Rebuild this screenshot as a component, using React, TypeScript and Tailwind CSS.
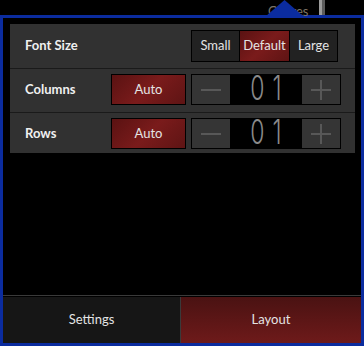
import React from 'react';

const RED = 'bg-[linear-gradient(135deg,#5a1212_0%,#7a1b1b_50%,#5e1414_100%)]';

function Stepper() {
  return (
    <div className="flex h-[31px] w-[150px] border border-black bg-black">
      <div className="flex w-[38px] items-center justify-center bg-[#353535]">
        <div className="h-[2px] w-[20px] bg-[#585858]" />
      </div>
      <div className="flex flex-1 items-center justify-center bg-black pl-[8px]">
        <span className="inline-block scale-y-[1.45] font-['Inter'] text-[23px] font-light leading-none tracking-[8px] text-[#8a8a8a]">
          01
        </span>
      </div>
      <div className="relative flex w-[38px] items-center justify-center bg-[#353535]">
        <div className="absolute h-[2px] w-[20px] bg-[#585858]" />
        <div className="absolute h-[20px] w-[2px] bg-[#585858]" />
      </div>
    </div>
  );
}

function AutoButton() {
  return (
    <div
      className={`flex h-[31px] w-[75px] items-center justify-center border border-black ${RED} text-[13px] text-[#e4e4e4]`}
    >
      Auto
    </div>
  );
}

export default function App() {
  return (
    <div className="relative flex h-[346px] w-[364px] flex-col overflow-hidden bg-black pt-[15px] font-['Lato',sans-serif]">
      {/* bits of the window behind the popup */}
      <div className="absolute left-[268px] top-[2px] text-[13px] text-[#7c7466]">Genres</div>
      <div className="absolute left-[319px] top-0 h-[15px] w-[3px] bg-[#9c9c9c]" />
      <div className="absolute left-[322px] top-0 h-[15px] w-[3px] bg-[#5c5c5c]" />
      <svg className="absolute left-[266px] top-0" width="38" height="16" aria-hidden="true">
        <polygon points="0,16 18.5,0 37,16" fill="#0b2c9f" />
      </svg>

      <div className="flex flex-1 flex-col border-[3px] border-[#0b2c9f] bg-black">
        {/* settings panel */}
        <div className="ml-[7px] mr-[6px] mt-[6px] flex flex-col bg-[#313131]">
          <div className="flex h-[44px] items-center">
            <div className="w-[181px] pl-[15px] text-[13px] font-bold text-[#f0f0f0]">Font Size</div>
            <div className="flex h-[32px] w-[147px] border border-black bg-black text-[13px] text-[#e4e4e4]">
              <div className="flex w-[47px] items-center justify-center bg-[#222222]">Small</div>
              <div className={`ml-px flex w-[49px] items-center justify-center ${RED}`}>Default</div>
              <div className="ml-px flex flex-1 items-center justify-center bg-[#222222]">Large</div>
            </div>
          </div>
          <div className="h-px bg-[#1a1a1a]" />
          <div className="flex h-[43px] items-start pt-[5px]">
            <div className="flex h-[31px] w-[101px] items-center pl-[15px] text-[13px] font-bold text-[#f0f0f0]">
              Columns
            </div>
            <AutoButton />
            <div className="ml-[5px]">
              <Stepper />
            </div>
          </div>
          <div className="h-px bg-[#1a1a1a]" />
          <div className="flex h-[40px] items-start pt-[5px]">
            <div className="flex h-[31px] w-[101px] items-center pl-[15px] text-[13px] font-bold text-[#f0f0f0]">
              Rows
            </div>
            <AutoButton />
            <div className="ml-[5px]">
              <Stepper />
            </div>
          </div>
        </div>

        <div className="flex-1" />

        {/* tabs */}
        <div className="h-px bg-[#3a3a3a]" />
        <div className="mt-px flex h-[46px] text-[13px] text-[#e4e4e4]">
          <div className="flex w-[177px] items-center justify-center bg-[#161616]">Settings</div>
          <div className="w-px bg-[#3a3a3a]" />
          <div className="flex flex-1 items-center justify-center bg-[linear-gradient(180deg,#4a1212_0%,#6e1a1a_100%)]">
            Layout
          </div>
        </div>
      </div>
    </div>
  );
}
